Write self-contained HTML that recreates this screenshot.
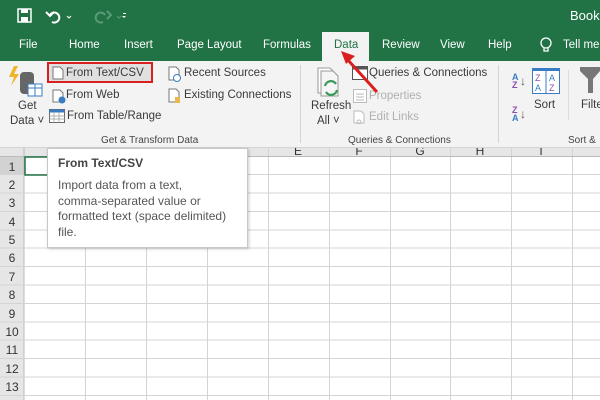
<!DOCTYPE html>
<html><head><meta charset="utf-8"><style>
*{margin:0;padding:0;box-sizing:border-box}
body{width:600px;height:400px;overflow:hidden;background:#fff;font-family:"Liberation Sans",sans-serif;position:relative;color:#333}
.a{position:absolute;white-space:nowrap}
.g{background:#217346}
.t{color:#fff;font-size:11.5px}
.r{font-size:11.5px;color:#3a3a3a}
.dim{color:#b0b0b0}
.sm{font-size:10px;color:#444}
</style></head><body>
<div class="a g" style="left:0;top:0;width:600px;height:61px"></div>
<!-- QAT -->
<svg class="a" style="left:17px;top:8px" width="110" height="16">
<rect x="1" y="1" width="13" height="13" fill="none" stroke="#fff" stroke-width="1.5"/><rect x="4" y="1" width="7" height="4" fill="#fff"/><rect x="4" y="9" width="7" height="5" fill="#fff"/>
<path d="M33 7 a5 5 0 1 1 2 7" fill="none" stroke="#fff" stroke-width="2"/><path d="M29 4 l4 4 l4-4" fill="none" stroke="#fff" stroke-width="2"/>
<path d="M50 8 l2 2 l2-2" fill="none" stroke="#fff"/>
<path d="M88 7 a5 5 0 1 0 -2 7" fill="none" stroke="#5b9a77" stroke-width="2"/><path d="M84 4 l4 4 l-4 4" fill="none" stroke="#5b9a77" stroke-width="2" transform="translate(6,-1)"/>
<path d="M100 8 l2 2 l2-2" fill="none" stroke="#5b9a77"/>
<rect x="106" y="5" width="3" height="1" fill="#fff"/><path d="M105 8 l2 2 l2-2" fill="#fff"/>
</svg>
<div class="a t" style="left:570px;top:8px;font-size:13px">Book1</div>
<div class="a t" style="left:19px;top:39px">File</div>
<div class="a t" style="left:69px;top:39px">Home</div>
<div class="a t" style="left:124px;top:39px">Insert</div>
<div class="a t" style="left:177px;top:39px">Page Layout</div>
<div class="a t" style="left:263px;top:39px">Formulas</div>
<div class="a" style="left:322px;top:32px;width:47px;height:30px;background:#f3f3f3"></div>
<div class="a" style="left:334px;top:39px;font-size:11.5px;color:#217346">Data</div>
<div class="a t" style="left:382px;top:39px">Review</div>
<div class="a t" style="left:440px;top:39px">View</div>
<div class="a t" style="left:488px;top:39px">Help</div>
<svg class="a" style="left:539px;top:37px" width="14" height="17"><circle cx="7" cy="6" r="5" fill="none" stroke="#fff" stroke-width="1.3"/><path d="M5 11v3h4v-3" fill="none" stroke="#fff" stroke-width="1.3"/></svg>
<div class="a t" style="left:563px;top:39px">Tell me</div>
<!-- ribbon -->
<div class="a" style="left:0;top:61px;width:600px;height:87px;background:#f3f3f3;border-bottom:1px solid #d4d4d4"></div>
<div class="a" style="left:300px;top:65px;width:1px;height:78px;background:#d4d4d4"></div>
<div class="a" style="left:498px;top:65px;width:1px;height:78px;background:#d4d4d4"></div>
<!-- Get Data -->
<svg class="a" style="left:8px;top:66px" width="36" height="32"><path d="M6 0 l-5 11 h5 l-3 9 l8-12 h-5 l4-8z" fill="#f0b429"/><rect x="12" y="6" width="14" height="22" rx="4" fill="#666"/><rect x="20" y="18" width="14" height="12" fill="#fff" stroke="#3a7cc4"/><line x1="20" y1="22" x2="34" y2="22" stroke="#3a7cc4"/><line x1="27" y1="18" x2="27" y2="30" stroke="#3a7cc4"/></svg>
<div class="a r" style="left:18px;top:100px">Get</div>
<div class="a r" style="left:10px;top:115px">Data ˅</div>
<div class="a" style="left:47px;top:62px;width:106px;height:21px;border:2px solid #d9201e;background:#e0e0e0"></div>
<svg class="a" style="left:52px;top:66px" width="12" height="14"><path d="M1 1h7l3 3v9H1z" fill="#fff" stroke="#777"/></svg>
<div class="a r" style="left:66px;top:67px">From Text/CSV</div>
<svg class="a" style="left:52px;top:89px" width="14" height="15"><path d="M1 1h7l3 3v9H1z" fill="#fff" stroke="#777"/><circle cx="10" cy="11" r="3.5" fill="#3a7cc4"/></svg>
<div class="a r" style="left:66px;top:89px">From Web</div>
<svg class="a" style="left:49px;top:109px" width="16" height="14"><rect x="0.5" y="0.5" width="15" height="13" fill="#fff" stroke="#666"/><rect x="0.5" y="0.5" width="15" height="3" fill="#3a7cc4"/><path d="M0 7h16M0 10h16M5 3v11M10 3v11" stroke="#999" stroke-width=".7"/></svg>
<div class="a r" style="left:67px;top:110px">From Table/Range</div>
<svg class="a" style="left:168px;top:66px" width="14" height="16"><path d="M1 1h7l3 3v10H1z" fill="#fff" stroke="#777"/><circle cx="9" cy="12" r="3.5" fill="#fff" stroke="#3a7cc4"/></svg>
<div class="a r" style="left:184px;top:67px">Recent Sources</div>
<svg class="a" style="left:168px;top:88px" width="14" height="16"><path d="M1 1h7l3 3v10H1z" fill="#fff" stroke="#777"/><rect x="7" y="9" width="5" height="6" fill="#e8b84a"/></svg>
<div class="a r" style="left:184px;top:89px">Existing Connections</div>
<div class="a sm" style="left:101px;top:135px">Get &amp; Transform Data</div>
<!-- Queries -->
<svg class="a" style="left:315px;top:66px" width="30" height="32"><path d="M3 2h12l5 5v20H3z" fill="#fff" stroke="#999"/><path d="M6 5h12l5 5v20H6z" fill="#f5f5f5" stroke="#999"/><path d="M10 20a6 6 0 0 1 11-2M22 24a6 6 0 0 1-11 2" fill="none" stroke="#3a9a5a" stroke-width="2.2"/></svg>
<div class="a r" style="left:311px;top:100px">Refresh</div>
<div class="a r" style="left:317px;top:115px">All ˅</div>
<svg class="a" style="left:352px;top:66px" width="16" height="14"><rect x="0.5" y="0.5" width="15" height="13" fill="#fff" stroke="#555"/><rect x="0.5" y="0.5" width="15" height="3" fill="#555"/></svg>
<div class="a r" style="left:369px;top:67px">Queries &amp; Connections</div>
<svg class="a" style="left:353px;top:89px" width="14" height="14"><rect x="0.5" y="0.5" width="13" height="13" fill="#fff" stroke="#bbb"/><path d="M3 5h8M3 8h8M3 11h8" stroke="#bbb"/></svg>
<div class="a r dim" style="left:369px;top:90px">Properties</div>
<svg class="a" style="left:353px;top:110px" width="14" height="14"><path d="M1 1h7l3 3v9H1z" fill="#fff" stroke="#bbb"/><circle cx="6" cy="12" r="2" fill="none" stroke="#bbb"/></svg>
<div class="a r dim" style="left:369px;top:111px">Edit Links</div>
<div class="a sm" style="left:348px;top:135px">Queries &amp; Connections</div>
<!-- Sort -->
<div class="a" style="left:512px;top:73px;font-size:9px;line-height:8px;color:#3a7cc4;font-weight:bold">A<br><span style="color:#8a4fa8">Z</span></div>
<div class="a" style="left:520px;top:74px;font-size:12px;color:#555">↓</div>
<div class="a" style="left:512px;top:106px;font-size:9px;line-height:8px;color:#8a4fa8;font-weight:bold">Z<br><span style="color:#3a7cc4">A</span></div>
<div class="a" style="left:520px;top:107px;font-size:12px;color:#555">↓</div>
<svg class="a" style="left:532px;top:68px" width="28" height="26"><rect x="0.5" y="0.5" width="27" height="25" fill="#fff" stroke="#3a7cc4"/><rect x="0" y="0" width="28" height="3" fill="#3a7cc4"/><line x1="14" y1="3" x2="14" y2="26" stroke="#3a7cc4"/><text x="3" y="13" font-size="9" fill="#8a4fa8" font-family="Liberation Sans">Z</text><text x="3" y="23" font-size="9" fill="#3a7cc4" font-family="Liberation Sans">A</text><text x="17" y="13" font-size="9" fill="#3a7cc4" font-family="Liberation Sans">A</text><text x="17" y="23" font-size="9" fill="#8a4fa8" font-family="Liberation Sans">Z</text></svg>
<div class="a r" style="left:534px;top:99px">Sort</div>
<div class="a" style="left:568px;top:70px;width:1px;height:50px;background:#ddd"></div>
<svg class="a" style="left:580px;top:67px" width="20" height="28"><path d="M0 0h20v4l-7 8v14h-5v-14l-8-8z" fill="#777"/></svg>
<div class="a r" style="left:581px;top:99px">Filte</div>
<div class="a sm" style="left:568px;top:135px">Sort &amp;</div>
<!-- grid -->
<svg class="a" style="left:0;top:148px" width="600" height="252">
<rect x="0" y="0" width="600" height="9" fill="#e6e6e6"/>
<rect x="0" y="0" width="24" height="252" fill="#e6e6e6"/>
<rect x="0" y="9" width="24" height="18" fill="#d2d2d2"/>
<g stroke="#d4d4d4" stroke-width="1">
<line x1="24" y1="0" x2="24" y2="252" stroke="#bbb"/>
<line x1="85.5" y1="0" x2="85.5" y2="252"/><line x1="146.5" y1="0" x2="146.5" y2="252"/><line x1="207.5" y1="0" x2="207.5" y2="252"/><line x1="268.5" y1="0" x2="268.5" y2="252"/><line x1="329.5" y1="0" x2="329.5" y2="252"/><line x1="390.5" y1="0" x2="390.5" y2="252"/><line x1="450.5" y1="0" x2="450.5" y2="252"/><line x1="511.5" y1="0" x2="511.5" y2="252"/><line x1="572.5" y1="0" x2="572.5" y2="252"/>
<line x1="0" y1="8.5" x2="600" y2="8.5" stroke="#bbb"/>
<line x1="0" y1="26.5" x2="600" y2="26.5"/><line x1="0" y1="45" x2="600" y2="45"/><line x1="0" y1="63.5" x2="600" y2="63.5"/><line x1="0" y1="82" x2="600" y2="82"/><line x1="0" y1="100" x2="600" y2="100"/><line x1="0" y1="118.5" x2="600" y2="118.5"/><line x1="0" y1="137" x2="600" y2="137"/><line x1="0" y1="155.5" x2="600" y2="155.5"/><line x1="0" y1="174" x2="600" y2="174"/><line x1="0" y1="192" x2="600" y2="192"/><line x1="0" y1="210.5" x2="600" y2="210.5"/><line x1="0" y1="229" x2="600" y2="229"/><line x1="0" y1="247.5" x2="600" y2="247.5"/>
</g>
<rect x="25" y="9" width="60" height="18" fill="none" stroke="#217346" stroke-width="1.5"/>
<g font-family="Liberation Sans" font-size="12" fill="#333" text-anchor="middle">
<text x="12" y="23">1</text><text x="12" y="41">2</text><text x="12" y="59">3</text><text x="12" y="78">4</text><text x="12" y="96">5</text><text x="12" y="114">6</text><text x="12" y="133">7</text><text x="12" y="151">8</text><text x="12" y="170">9</text><text x="12" y="188">10</text><text x="12" y="206">11</text><text x="12" y="225">12</text><text x="12" y="243">13</text>
<text x="298" y="7">E</text><text x="359" y="7">F</text><text x="420" y="7">G</text><text x="480" y="7">H</text><text x="541" y="7">I</text>
</g>
</svg>
<!-- tooltip -->
<div class="a" style="left:47px;top:148px;width:201px;height:100px;background:#fff;border:1px solid #c8c8c8;box-shadow:1px 1px 3px rgba(0,0,0,.2)"></div>
<div class="a" style="left:58px;top:156px;font-size:12px;font-weight:bold;color:#444">From Text/CSV</div>
<div class="a" style="left:58px;top:178px;font-size:12px;line-height:15.5px;color:#555">Import data from a text,<br>comma-separated value or<br>formatted text (space delimited)<br>file.</div>
<!-- arrow -->
<svg class="a" style="left:330px;top:45px" width="60" height="55"><line x1="47" y1="47" x2="17" y2="14" stroke="#d9201e" stroke-width="3"/><path d="M11 6 l14 5 l-9 8z" fill="#d9201e"/></svg>
</body></html>
